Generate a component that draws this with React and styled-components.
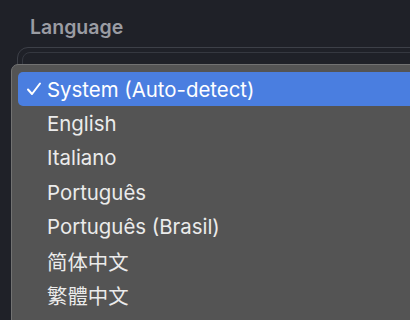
import React from "react";
import styled, { createGlobalStyle } from "styled-components";

const Global = createGlobalStyle`
  html, body { margin: 0; padding: 0; background: #1f2128; overflow: hidden; }
  body { font-family: Inter, "Noto Sans CJK SC", sans-serif; }
`;

const Page = styled.div`
  position: relative;
  width: 410px;
  height: 320px;
  padding-top: 15px;
  box-sizing: border-box;
  overflow: hidden;
`;

const Label = styled.div`
  margin-left: 30px;
  font-size: 19.5px;
  font-weight: 600;
  color: #9a9ca3;
  line-height: 24px;
`;

const SelectBox = styled.div`
  margin: 8px 0 0 17px;
  width: 460px;
  height: 44px;
  border: 1px solid #3d4048;
  border-radius: 11px;
  padding: 4px;
  box-sizing: border-box;
`;

const SelectInner = styled.div`
  height: 100%;
  border: 1px solid #353840;
  border-radius: 8px;
`;

const Menu = styled.ul`
  position: absolute;
  top: 64px;
  left: 11px;
  width: 460px;
  margin: 0;
  padding: 7px 6px 40px;
  list-style: none;
  background: #545454;
  border: 1px solid #727272;
  border-radius: 7px;
  box-sizing: border-box;
  font-family: Inter, "Noto Sans CJK SC", sans-serif;
`;

const Item = styled.li`
  position: relative;
  height: 34.3px;
  display: flex;
  align-items: center;
  padding-left: 29px;
  border-radius: 5px;
  font-size: 20.4px;
  color: ${(p) => (p.$selected ? "#ffffff" : "#ebebeb")};
  background: ${(p) => (p.$selected ? "#4a7ee0" : "transparent")};
`;

const Check = styled.span`
  position: absolute;
  left: 8px;
  top: 50%;
  transform: translateY(-50%);
  display: flex;
`;

const languages = [
  "System (Auto-detect)",
  "English",
  "Italiano",
  "Português",
  "Português (Brasil)",
  "简体中文",
  "繁體中文",
];

export default function App() {
  return (
    <>
      <Global />
      <Page>
        <Label>Language</Label>
        <SelectBox>
          <SelectInner />
        </SelectBox>
        <Menu>
          {languages.map((l, i) => (
            <Item key={l} $selected={i === 0}>
              {i === 0 && (
                <Check>
                  <svg width="16" height="16" viewBox="0 0 16 16">
                    <path d="M2 8.5 L6 13 L14 2.5" fill="none" stroke="#fff" strokeWidth="2" strokeLinecap="round" strokeLinejoin="round" />
                  </svg>
                </Check>
              )}
              {l}
            </Item>
          ))}
        </Menu>
      </Page>
    </>
  );
}
